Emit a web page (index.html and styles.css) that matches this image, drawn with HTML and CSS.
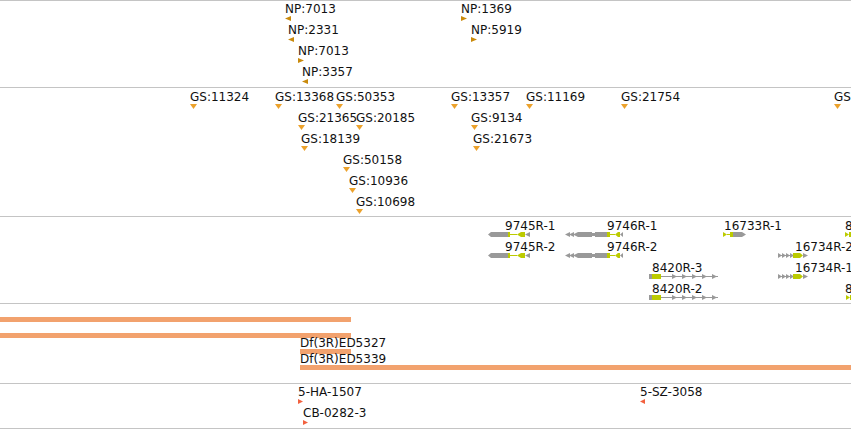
FILE: index.html
```html
<html>
<head>
  <meta charset="UTF-8" />
  <title>Genome Browser - 3R</title>
  <link rel="stylesheet" href="styles.css">
</head>
<body>

  <div class="view">

    <!-- NP insertions -->
    <div class="track track-np">
      <div class="feat" style="left:285px;top:1px"><span class="lbl">NP:7013</span><svg class="tri np" width="6" height="5"><polygon points="0,2.5 6,0 6,5"/></svg></div>
      <div class="feat" style="left:288px;top:22px"><span class="lbl">NP:2331</span><svg class="tri np" width="6" height="5"><polygon points="0,2.5 6,0 6,5"/></svg></div>
      <div class="feat" style="left:298px;top:43px"><span class="lbl">NP:7013</span><svg class="tri np" width="6" height="5"><polygon points="0,0 6,2.5 0,5"/></svg></div>
      <div class="feat" style="left:302px;top:64px"><span class="lbl">NP:3357</span><svg class="tri np" width="6" height="5"><polygon points="0,2.5 6,0 6,5"/></svg></div>
      <div class="feat" style="left:461px;top:1px"><span class="lbl">NP:1369</span><svg class="tri np" width="6" height="5"><polygon points="0,0 6,2.5 0,5"/></svg></div>
      <div class="feat" style="left:471px;top:22px"><span class="lbl">NP:5919</span><svg class="tri np" width="6" height="5"><polygon points="0,0 6,2.5 0,5"/></svg></div>
    </div>

    <!-- GS insertions -->
    <div class="track track-gs">
      <div class="feat" style="left:190px;top:2px"><span class="lbl">GS:11324</span><svg class="tri gs" width="7" height="5"><polygon points="0,0 7,0 3.5,5"/></svg></div>
      <div class="feat" style="left:275px;top:2px"><span class="lbl">GS:13368</span><svg class="tri gs" width="7" height="5"><polygon points="0,0 7,0 3.5,5"/></svg></div>
      <div class="feat" style="left:336px;top:2px"><span class="lbl">GS:50353</span><svg class="tri gs" width="7" height="5"><polygon points="0,0 7,0 3.5,5"/></svg></div>
      <div class="feat" style="left:451px;top:2px"><span class="lbl">GS:13357</span><svg class="tri gs" width="7" height="5"><polygon points="0,0 7,0 3.5,5"/></svg></div>
      <div class="feat" style="left:526px;top:2px"><span class="lbl">GS:11169</span><svg class="tri gs" width="7" height="5"><polygon points="0,0 7,0 3.5,5"/></svg></div>
      <div class="feat" style="left:621px;top:2px"><span class="lbl">GS:21754</span><svg class="tri gs" width="7" height="5"><polygon points="0,0 7,0 3.5,5"/></svg></div>
      <div class="feat" style="left:834px;top:2px"><span class="lbl">GS:11402</span><svg class="tri gs" width="7" height="5"><polygon points="0,0 7,0 3.5,5"/></svg></div>
      <div class="feat" style="left:298px;top:23px"><span class="lbl">GS:21365</span><svg class="tri gs" width="7" height="5"><polygon points="0,0 7,0 3.5,5"/></svg></div>
      <div class="feat" style="left:356px;top:23px"><span class="lbl">GS:20185</span><svg class="tri gs" width="7" height="5"><polygon points="0,0 7,0 3.5,5"/></svg></div>
      <div class="feat" style="left:471px;top:23px"><span class="lbl">GS:9134</span><svg class="tri gs" width="7" height="5"><polygon points="0,0 7,0 3.5,5"/></svg></div>
      <div class="feat" style="left:301px;top:44px"><span class="lbl">GS:18139</span><svg class="tri gs" width="7" height="5"><polygon points="0,0 7,0 3.5,5"/></svg></div>
      <div class="feat" style="left:473px;top:44px"><span class="lbl">GS:21673</span><svg class="tri gs" width="7" height="5"><polygon points="0,0 7,0 3.5,5"/></svg></div>
      <div class="feat" style="left:343px;top:65px"><span class="lbl">GS:50158</span><svg class="tri gs" width="7" height="5"><polygon points="0,0 7,0 3.5,5"/></svg></div>
      <div class="feat" style="left:349px;top:86px"><span class="lbl">GS:10936</span><svg class="tri gs" width="7" height="5"><polygon points="0,0 7,0 3.5,5"/></svg></div>
      <div class="feat" style="left:356px;top:107px"><span class="lbl">GS:10698</span><svg class="tri gs" width="7" height="5"><polygon points="0,0 7,0 3.5,5"/></svg></div>
    </div>

    <!-- gene models -->
    <div class="track track-gene">
      <span class="lbl gl" style="left:505px;top:2px">9745R-1</span>
      <svg class="gene" style="left:488px;top:15px" width="42" height="5">
        <polygon class="utr" points="0,2.5 3,0 20,0 20,5 3,5"/>
        <rect class="cds" x="20" y="0" width="2" height="5"/>
        <rect class="cds" x="22" y="2" width="7" height="1"/>
        <polygon class="cds" points="29,2.5 33,0 37,0 37,5 33,5"/>
        <polygon class="utr" points="37,2.5 42,0 42,5"/>
      </svg>
      <span class="lbl gl" style="left:505px;top:23px">9745R-2</span>
      <svg class="gene" style="left:488px;top:36px" width="42" height="5">
        <polygon class="utr" points="0,2.5 3,0 20,0 20,5 3,5"/>
        <rect class="cds" x="20" y="0" width="2" height="5"/>
        <rect class="cds" x="22" y="2" width="7" height="1"/>
        <polygon class="cds" points="29,2.5 33,0 37,0 37,5 33,5"/>
        <polygon class="utr" points="37,2.5 42,0 42,5"/>
      </svg>

      <span class="lbl gl" style="left:607px;top:2px">9746R-1</span>
      <svg class="gene" style="left:565px;top:15px" width="58" height="5">
        <polygon class="utr" points="0,2.5 5,0 5,5"/>
        <polygon class="utr" points="4,2.5 9,0 9,5"/>
        <polygon class="utr" points="8,2.5 13,0 13,5"/>
        <rect class="utr" x="13" y="0" width="14" height="5"/>
        <rect class="utr" x="27" y="1" width="3" height="3"/>
        <rect class="utr" x="30" y="0" width="12" height="5"/>
        <rect class="cds" x="42" y="0" width="3" height="5"/>
        <rect class="cds" x="45" y="2" width="5" height="1"/>
        <polygon class="cds" points="50,2.5 53,0 55,0 55,5 53,5"/>
        <polygon class="utr" points="55,2.5 58,0 58,5"/>
      </svg>
      <span class="lbl gl" style="left:607px;top:23px">9746R-2</span>
      <svg class="gene" style="left:565px;top:36px" width="58" height="5">
        <polygon class="utr" points="0,2.5 5,0 5,5"/>
        <polygon class="utr" points="4,2.5 9,0 9,5"/>
        <polygon class="utr" points="8,2.5 13,0 13,5"/>
        <rect class="utr" x="13" y="0" width="14" height="5"/>
        <rect class="utr" x="27" y="1" width="3" height="3"/>
        <rect class="utr" x="30" y="0" width="12" height="5"/>
        <rect class="cds" x="42" y="0" width="3" height="5"/>
        <rect class="cds" x="45" y="2" width="5" height="1"/>
        <polygon class="cds" points="50,2.5 53,0 55,0 55,5 53,5"/>
        <polygon class="utr" points="55,2.5 58,0 58,5"/>
      </svg>

      <span class="lbl gl" style="left:652px;top:44px">8420R-3</span>
      <svg class="gene" style="left:649px;top:57px" width="69" height="5">
        <rect class="utr" x="0" y="0" width="3" height="5"/>
        <rect class="cds" x="3" y="0" width="9" height="5"/>
        <rect class="utr" x="12" y="2" width="57" height="1"/>
        <polygon class="utr" points="23,0 28,2.5 23,5"/>
        <polygon class="utr" points="33,0 38,2.5 33,5"/>
        <polygon class="utr" points="43,0 48,2.5 43,5"/>
        <polygon class="utr" points="53,0 58,2.5 53,5"/>
        <polygon class="utr" points="63,0 68,2.5 63,5"/>
      </svg>
      <span class="lbl gl" style="left:652px;top:65px">8420R-2</span>
      <svg class="gene" style="left:649px;top:78px" width="69" height="5">
        <rect class="utr" x="0" y="0" width="3" height="5"/>
        <rect class="cds" x="3" y="0" width="9" height="5"/>
        <rect class="utr" x="12" y="2" width="57" height="1"/>
        <polygon class="utr" points="23,0 28,2.5 23,5"/>
        <polygon class="utr" points="33,0 38,2.5 33,5"/>
        <polygon class="utr" points="43,0 48,2.5 43,5"/>
        <polygon class="utr" points="53,0 58,2.5 53,5"/>
        <polygon class="utr" points="63,0 68,2.5 63,5"/>
      </svg>

      <span class="lbl gl" style="left:724px;top:2px">16733R-1</span>
      <svg class="gene" style="left:723px;top:15px" width="23" height="5">
        <polygon class="cds" points="0,0 4,2.5 0,5"/>
        <rect class="cds" x="4" y="2" width="3" height="1"/>
        <rect class="cds" x="7" y="0" width="3" height="5"/>
        <polygon class="utr" points="10,0 19,0 23,2.5 19,5 10,5"/>
      </svg>

      <span class="lbl gl" style="left:795px;top:23px">16734R-2</span>
      <svg class="gene" style="left:778px;top:36px" width="30" height="5">
        <rect class="utr" x="0" y="2" width="16" height="1"/>
        <polygon class="utr" points="0,0 4,2.5 0,5"/>
        <polygon class="utr" points="4,0 8,2.5 4,5"/>
        <polygon class="utr" points="8,0 12,2.5 8,5"/>
        <polygon class="utr" points="12,0 16,2.5 12,5"/>
        <polygon class="cds" points="15,0 22,0 25,2.5 22,5 15,5"/>
        <polygon class="utr" points="25,0 30,2.5 25,5"/>
      </svg>
      <span class="lbl gl" style="left:795px;top:44px">16734R-1</span>
      <svg class="gene" style="left:778px;top:57px" width="30" height="5">
        <rect class="utr" x="0" y="2" width="16" height="1"/>
        <polygon class="utr" points="0,0 4,2.5 0,5"/>
        <polygon class="utr" points="4,0 8,2.5 4,5"/>
        <polygon class="utr" points="8,0 12,2.5 8,5"/>
        <polygon class="utr" points="12,0 16,2.5 12,5"/>
        <polygon class="cds" points="15,0 22,0 25,2.5 22,5 15,5"/>
        <polygon class="utr" points="25,0 30,2.5 25,5"/>
      </svg>

      <span class="lbl gl" style="left:845px;top:2px">8419R-1</span>
      <svg class="gene" style="left:845px;top:15px" width="8" height="5">
        <polygon class="cds" points="0,0 4,2.5 0,5"/>
        <rect class="cds" x="4" y="0" width="4" height="5"/>
      </svg>
      <span class="lbl gl" style="left:845px;top:65px">8419R-2</span>
      <svg class="gene" style="left:846px;top:78px" width="8" height="5">
        <polygon class="cds" points="0,0 4,2.5 0,5"/>
        <rect class="cds" x="4" y="0" width="4" height="5"/>
      </svg>
    </div>

    <!-- deficiencies -->
    <div class="track track-del">
      <div class="del" style="left:0;top:13px;width:351px"></div>
      <div class="del" style="left:0;top:29px;width:351px"></div>
      <div class="feat" style="left:300px;top:33px"><span class="lbl dl">Df(3R)ED5327</span><div class="bar" style="width:51px"></div></div>
      <div class="feat" style="left:300px;top:49px"><span class="lbl dl">Df(3R)ED5339</span><div class="bar" style="width:551px"></div></div>
    </div>

    <!-- other insertions -->
    <div class="track track-ins">
      <div class="feat" style="left:298px;top:1px"><span class="lbl">5-HA-1507</span><svg class="tri ins" width="5" height="5"><polygon points="0,0 5,2.5 0,5"/></svg></div>
      <div class="feat" style="left:303px;top:22px"><span class="lbl">CB-0282-3</span><svg class="tri ins" width="5" height="5"><polygon points="0,0 5,2.5 0,5"/></svg></div>
      <div class="feat" style="left:640px;top:1px"><span class="lbl">5-SZ-3058</span><svg class="tri ins" width="5" height="5"><polygon points="0,2.5 5,0 5,5"/></svg></div>
    </div>

  </div>

</body>
</html>
```

FILE: styles.css
```css
body {
  margin: 0;
  background-color: white;
  font-family: "DejaVu Sans", sans-serif;
  overflow: hidden;
}
.view {
  width: 851px;
  border-top: 1px solid #c4c4c4;
}
.track {
  position: relative;
  overflow: hidden;
  border-bottom: 1px solid #c4c4c4;
}
.track-np { height: 86px; }
.track-gs { height: 128px; }
.track-gene { height: 86px; }
.track-del { height: 79px; }
.track-ins { height: 44px; }

.feat {
  position: absolute;
}
.lbl {
  display: block;
  font-size: 12px;
  line-height: 14px;
  color: #111;
  white-space: nowrap;
}
.lbl.gl {
  position: absolute;
  line-height: 14px;
}
.lbl.dl {
  line-height: 12px;
}
.tri {
  display: block;
}
.tri.np { fill: #c98a0c; }
.tri.gs { fill: #eca22c; }
.tri.ins { fill: #f2613f; }

.gene {
  position: absolute;
  display: block;
}
.gene .utr { fill: #999999; }
.gene .cds { fill: #bccb00; }

.del {
  position: absolute;
  height: 5px;
  background-color: #f2a26e;
}
.bar {
  height: 5px;
  background-color: #f2a26e;
}
```
